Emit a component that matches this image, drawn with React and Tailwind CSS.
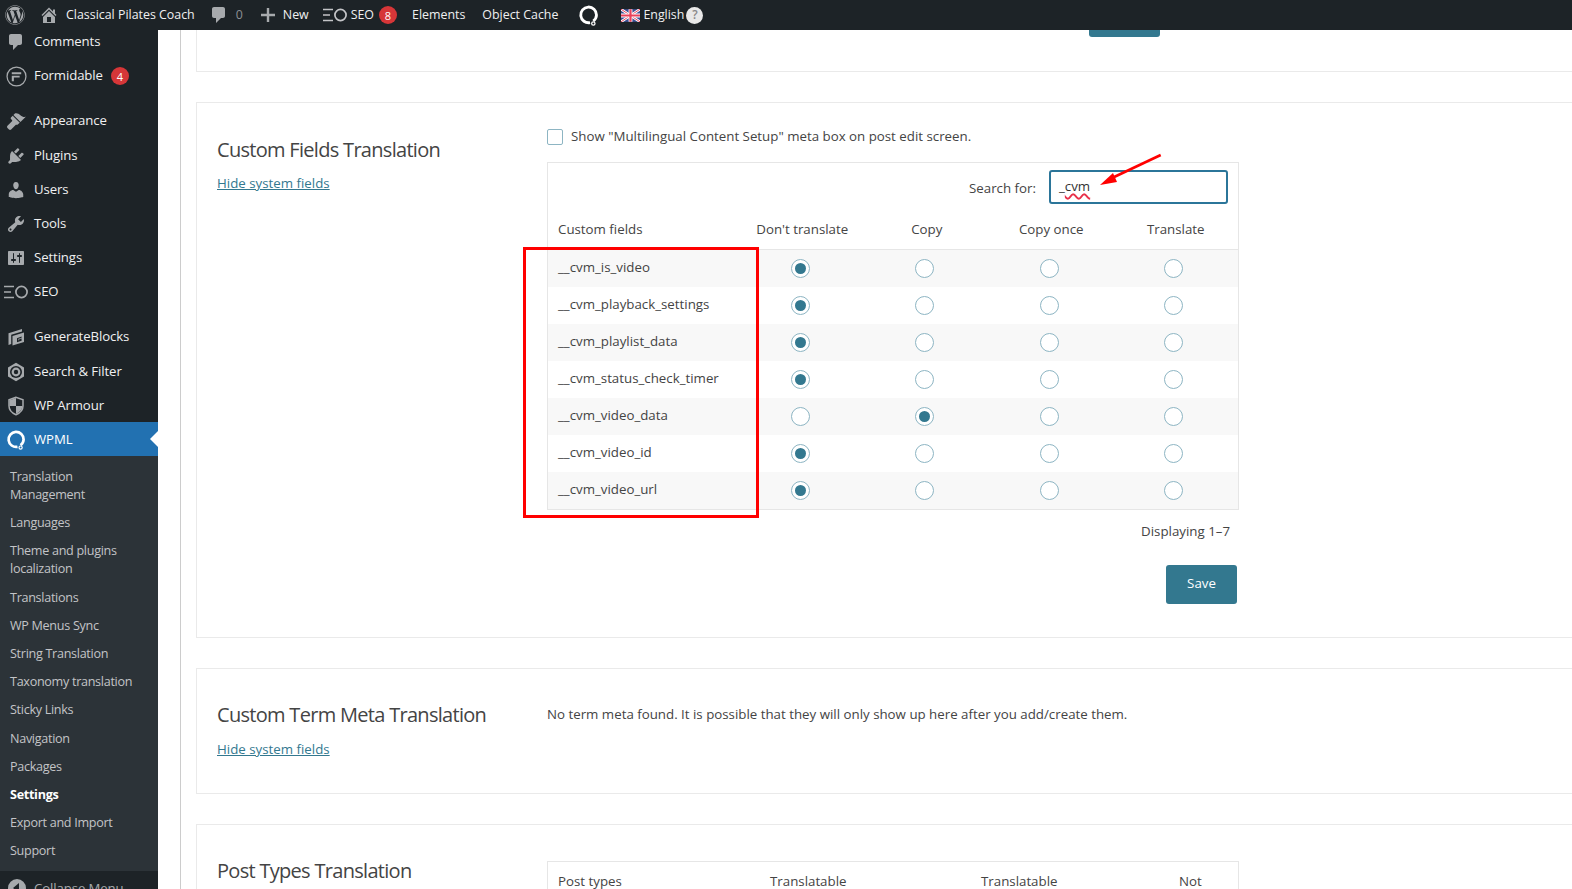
import React from "react";
import { FaWordpress } from "react-icons/fa";

const P = {
  home: "M16 8.5l1.53 1.53-1.06 1.06L10 4.62l-6.47 6.47-1.06-1.06L10 2.5l4 4v-2h2v4zm-6-2.46l6 5.99V18H4v-5.97zM12 17v-5H8v5h4z",
  comment: "M5 2h9c1.1 0 2 .9 2 2v7c0 1.1-.9 2-2 2h-2l-5 5v-5H5c-1.1 0-2-.9-2-2V4c0-1.1.9-2 2-2z",
  brush: "M14.48 11.06L7.41 3.99l1.5-1.5c.5-.56 2.3-.47 3.51.32 1.21.8 1.43 1.28 2.91 2.1 1.18.64 2.45 1.26 4.45.85zm-.71.71L6.7 4.7 4.93 6.47c-.39.39-.39 1.02 0 1.41l1.06 1.06c.39.39.39 1.03 0 1.42L1.5 14.85c-.6.6-.6 1.57 0 2.15l1.5 1.5c.6.6 1.55.6 2.15 0l4.5-4.5c.39-.39 1.03-.39 1.42 0z",
  plug: "M13.11 4.36L9.87 7.6 8 5.73l3.24-3.24c.35-.34 1.05-.2 1.56.32.52.51.66 1.21.31 1.55zm-8 1.77l.91-1.12 9.01 9.01-1.19.84c-.71.71-2.63 1.16-3.82 1.16H6.14L4.9 17.26c-.59.59-1.54.59-2.12 0-.59-.58-.59-1.53 0-2.12l1.24-1.24v-3.88c0-1.13.4-3.19 1.09-3.89zm7.26 3.97l3.24-3.24c.34-.35 1.04-.21 1.55.31.52.51.66 1.21.31 1.55l-3.24 3.25z",
  user: "M10 9.25c-2.27 0-2.73-3.44-2.73-3.44C7 4.02 7.82 2 9.97 2c2.16 0 2.98 2.02 2.71 3.81 0 0-.41 3.44-2.68 3.44zm0 2.57L12.72 10c2.39 0 4.52 2.33 4.52 4.53v2.49s-3.65 1.13-7.24 1.13c-3.65 0-7.24-1.13-7.24-1.13v-2.49c0-2.25 1.94-4.48 4.47-4.48z",
  tool: "M16.68 9.77c-1.34 1.34-3.3 1.67-4.95.99l-5.41 6.52c-.99.99-2.59.99-3.58 0s-.99-2.59 0-3.57l6.52-5.42c-.68-1.65-.35-3.61.99-4.95 1.28-1.28 3.12-1.62 4.72-1.06l-2.89 2.89 2.82 2.82 2.86-2.87c.53 1.58.18 3.39-1.08 4.65zM3.81 16.21c.4.39 1.04.39 1.43 0 .4-.4.4-1.04 0-1.43-.39-.4-1.03-.4-1.43 0-.39.39-.39 1.03 0 1.43z",
  settings: "M18 16V4c0-.55-.45-1-1-1H3c-.55 0-1 .45-1 1v12c0 .55.45 1 1 1h14c.55 0 1-.45 1-1zM8 11h1c.55 0 1 .45 1 1s-.45 1-1 1H8v1.5c0 .28-.22.5-.5.5s-.5-.22-.5-.5V13H6c-.55 0-1-.45-1-1s.45-1 1-1h1V5.5c0-.28.22-.5.5-.5s.5.22.5.5V11zm5-2h-1c-.55 0-1-.45-1-1s.45-1 1-1h1V5.5c0-.28.22-.5.5-.5s.5.22.5.5V7h1c.55 0 1 .45 1 1s-.45 1-1 1h-1v5.5c0 .28-.22.5-.5.5s-.5-.22-.5-.5V9z",
};

const Dash = ({ d, className = "w-5 h-5" }) => (
  <svg viewBox="0 0 20 20" className={className} fill="currentColor" fillRule="evenodd"><path d={d} /></svg>
);
const SeoIcon = ({ className = "w-6 h-4" }) => (
  <svg viewBox="0 0 24 16" className={className} fill="none" stroke="currentColor">
    <path d="M0 2.5h10M0 8h7M0 13.5h10" strokeWidth="1.3" />
    <circle cx="17.5" cy="8" r="5.6" strokeWidth="1.7" />
  </svg>
);
const Wpml = ({ className = "w-5 h-5" }) => (
  <svg viewBox="0 0 20 20" className={className} fill="none" stroke="currentColor">
    <path d="M11.5 16.8A7.5 7.5 0 1 1 17.6 9.5c0 2.4-1.2 4.2-3 5.8" strokeWidth="2.7" />
    <circle cx="14.6" cy="17.6" r="1.6" strokeWidth="1.2" />
  </svg>
);
const Formidable = () => (
  <svg viewBox="0 0 20 20" className="h-[21px] w-[21px]" fill="none" stroke="currentColor">
    <circle cx="10" cy="10" r="9" strokeWidth="1.2" />
    <path d="M5.5 6h9v1.8h-9zM5.5 9.2h7.5V11H7.5v3.5h-2z" fill="currentColor" stroke="none" />
  </svg>
);
const Generate = () => (
  <svg viewBox="0 0 20 20" className="h-5 w-5" fill="currentColor" fillRule="evenodd">
    <path d="M2.5 6.2L16 2v2.6L5.2 7.8V17l-2.7.9z" />
    <path d="M6.5 9.1L18 5.5V15L6.5 18.6zM11 11.3v3.9l4.6-1.4v-2.4l-2.3.7v1l-.9.3v-1.6l3.2-1V9.6z" />
  </svg>
);
const SearchFilter = () => (
  <svg viewBox="0 0 20 20" className="h-5 w-5">
    <path d="M10 .8l8 4.6v9.2l-8 4.6-8-4.6V5.4z" fill="#a7aaad" />
    <circle cx="10" cy="10" r="6" fill="#1d2327" />
    <circle cx="10" cy="10" r="4.4" fill="#a7aaad" />
    <circle cx="10" cy="10" r="2.2" fill="#1d2327" />
  </svg>
);
const Armour = () => (
  <svg viewBox="0 0 20 20" className="h-5 w-5">
    <path d="M10 2L3.5 4.3V10h6.5z" fill="#a7aaad" />
    <path d="M10 10h6.5c-.3 3.6-3 6.2-6.5 7.8z" fill="#a7aaad" />
    <path d="M10 1.3L3 3.8V10c0 4 3 7 7 8.7 4-1.7 7-4.7 7-8.7V3.8z" fill="none" stroke="#a7aaad" strokeWidth="1.5" />
  </svg>
);
const Flag = () => (
  <svg viewBox="0 0 60 40" className="h-[13px] w-[19px]">
    <rect width="60" height="40" fill="#3b4f93" />
    <path d="M0 0L60 40M60 0L0 40" stroke="#fff" strokeWidth="8" />
    <path d="M0 0L60 40M60 0L0 40" stroke="#e8415a" strokeWidth="3" />
    <path d="M30 0v40M0 20h60" stroke="#fff" strokeWidth="12" />
    <path d="M30 0v40M0 20h60" stroke="#e8415a" strokeWidth="7" />
  </svg>
);
const Badge = ({ n }) => (
  <span className="flex h-[18px] w-[18px] items-center justify-center rounded-full bg-[#d63638] text-[11px] leading-none text-white">{n}</span>
);

const menu = [
  { label: "Comments", icon: <Dash d={P.comment} />, cls: "h-[34px] pt-[2px]" },
  { label: "Formidable", icon: <Formidable />, badge: 4, cls: "h-[34px] mb-[11px] pt-[2px]" },
  { label: "Appearance", icon: <Dash d={P.brush} />, cls: "h-[35px]" },
  { label: "Plugins", icon: <Dash d={P.plug} />, cls: "h-[34px] pt-[2px]" },
  { label: "Users", icon: <Dash d={P.user} />, cls: "h-[34px] pt-[2px]" },
  { label: "Tools", icon: <Dash d={P.tool} />, cls: "h-[34px] pt-[2px]" },
  { label: "Settings", icon: <Dash d={P.settings} />, cls: "h-[34px] pt-[2px]" },
  { label: "SEO", icon: <SeoIcon />, cls: "h-[34px] mb-[11px] pt-[2px]" },
  { label: "GenerateBlocks", icon: <Generate />, cls: "h-[35px]" },
  { label: "Search & Filter", icon: <SearchFilter />, cls: "h-[34px] pt-[2px]" },
  { label: "WP Armour", icon: <Armour />, cls: "h-[34px] pt-[2px]" },
];

const sub = [
  ["Translation", "Management"],
  ["Languages"],
  ["Theme and plugins", "localization"],
  ["Translations"],
  ["WP Menus Sync"],
  ["String Translation"],
  ["Taxonomy translation"],
  ["Sticky Links"],
  ["Navigation"],
  ["Packages"],
  ["Settings"],
  ["Export and Import"],
  ["Support"],
];

const rows = [
  ["__cvm_is_video", 0],
  ["__cvm_playback_settings", 0],
  ["__cvm_playlist_data", 0],
  ["__cvm_status_check_timer", 0],
  ["__cvm_video_data", 1],
  ["__cvm_video_id", 0],
  ["__cvm_video_url", 0],
];

const Radio = ({ on }) => (
  <span className="flex h-[19px] w-[19px] items-center justify-center rounded-full border border-[#8db5c3] bg-white">
    {on && <span className="h-[11px] w-[11px] rounded-full bg-[#33788f]" />}
  </span>
);

const Side = ({ title, top = "pt-[31px]", gap = "mt-[9px]", link = true }) => (
  <div className={`w-[350px] shrink-0 pl-[20px] ${top}`}>
    <h2 className="text-[20px] leading-[30px] tracking-[-0.7px] text-[#444]">{title}</h2>
    {link && <a className={`block text-[13.3px] leading-[20px] text-[#33788f] underline ${gap}`}>Hide system fields</a>}
  </div>
);

export default function App() {
  return (
    <div className="relative flex h-[889px] w-[1572px] flex-col overflow-hidden bg-white font-['Open_Sans','Noto_Sans',sans-serif] text-[13.3px] text-[#444]">
      {/* admin bar */}
      <header className="flex h-[30px] shrink-0 items-center bg-[#1d2327] text-[12.4px] text-[#f0f0f1]">
        <FaWordpress className="ml-[5px] h-5 w-5 text-[#a7aaad]" />
        <span className="ml-[14px] text-[#a7aaad]"><Dash d={P.home} /></span>
        <span className="ml-[7px]">Classical Pilates Coach</span>
        <span className="ml-[14px] text-[#a7aaad]"><Dash d={P.comment} /></span>
        <span className="ml-[7px] text-[#8c8f94]">0</span>
        <svg viewBox="0 0 14 14" className="ml-[18px] h-[14px] w-[14px] text-[#a7aaad]" fill="currentColor"><path d="M5.8 0h2.4v5.8H14v2.4H8.2V14H5.8V8.2H0V5.8h5.8z" /></svg>
        <span className="ml-[8px]">New</span>
        <span className="ml-[14px] text-[#c3c4c7]"><SeoIcon /></span>
        <span className="ml-[4px]">SEO</span>
        <span className="ml-[5px]"><Badge n={8} /></span>
        <span className="ml-[15px]">Elements</span>
        <span className="ml-[17px]">Object Cache</span>
        <span className="ml-[20px] text-white"><Wpml className="h-[21px] w-[21px]" /></span>
        <span className="ml-[22px]"><Flag /></span>
        <span className="ml-[3px]">English</span>
        <span className="ml-[2px] flex h-[17px] w-[17px] items-center justify-center rounded-full bg-[#e8e8e8] text-[12px] font-semibold text-[#888]">?</span>
      </header>

      <div className="flex min-h-0 flex-1">
        {/* sidebar */}
        <aside className="w-[158px] shrink-0 overflow-hidden bg-[#1d2327] text-[13.2px] tracking-[-0.1px] text-[#f0f0f1]">
          <nav className="-mt-[6px]">
            {menu.map((m) => (
              <div key={m.label} className={`flex items-center ${m.cls}`}>
                <span className="flex w-[32px] shrink-0 items-center justify-center text-[#a7aaad]">{m.icon}</span>
                <span className="ml-[2px]">{m.label}</span>
                {m.badge && <span className="ml-[8px]"><Badge n={m.badge} /></span>}
              </div>
            ))}
            <div className="relative flex h-[34px] items-center bg-[#2271b1] pt-[2px] text-white">
              <span className="flex w-[32px] shrink-0 items-center justify-center"><Wpml /></span>
              <span className="ml-[2px]">WPML</span>
              <span className="absolute right-0 top-[9px] h-0 w-0 border-y-[8px] border-r-[8px] border-y-transparent border-r-white" />
            </div>
            <div className="bg-[#2c3338] pb-[6px] pt-[7px] text-[12.6px] leading-[18px] tracking-[-0.3px] text-[#c3c4c7]">
              {sub.map((s) => (
                <div key={s[0]} className={`px-[10px] py-[5.1px] ${s[0] === "Settings" ? "font-bold text-white" : ""}`}>
                  {s.map((l) => <div key={l}>{l}</div>)}
                </div>
              ))}
            </div>
            <div className="flex h-[34px] items-center text-[#a7aaad]">
              <span className="flex w-[34px] shrink-0 justify-center">
                <svg viewBox="0 0 20 20" className="h-5 w-5" fill="currentColor"><path fillRule="evenodd" d="M10 1a9 9 0 1 1 0 18 9 9 0 0 1 0-18zM12 5l-6 5 6 5z" /></svg>
              </span>
              <span>Collapse Menu</span>
            </div>
          </nav>
        </aside>

        {/* content */}
        <main className="ml-[22px] min-w-0 flex-1 overflow-hidden border-l border-[#ccc] pl-[15px]">
          <div className="-mr-[20px]">
            <section className="h-[42px] border-x border-b border-[#eaeaea]">
              <div className="ml-[892px] h-[7px] w-[71px] rounded-b-[3px] bg-[#33788f]" />
            </section>

            <section className="mt-[30px] flex h-[536px] border border-[#eaeaea]">
              <Side title="Custom Fields Translation" top="pt-[32px]" gap="mt-[8px]" />
              <div className="w-[692px] shrink-0 pt-[24px]">
                <label className="flex h-[20px] items-center">
                  <span className="h-[16px] w-[16px] rounded-[2px] border border-[#8db5c3]" />
                  <span className="ml-[8px]">Show "Multilingual Content Setup" meta box on post edit screen.</span>
                </label>
                <div className="mt-[15px] border border-[#e6e6e6]">
                  <div className="flex h-[49px] items-start justify-end pr-[10px] pt-[7px]">
                    <span className="mt-[8px] leading-[20px]">Search for:</span>
                    <div className="ml-[13px] flex h-[34px] w-[179px] items-center rounded-[3px] border-2 border-[#2b7599] pl-[8px] text-[#333]">
                      <span>_<span className="underline decoration-[#e8304a] decoration-wavy decoration-[1.5px] underline-offset-2">cvm</span></span>
                    </div>
                  </div>
                  <div className="grid h-[37.5px] grid-cols-[192px_repeat(4,1fr)] items-center border-b border-[#e6e6e6]">
                    <span className="pl-[10px]">Custom fields</span>
                    <span className="text-center">Don't translate</span>
                    <span className="text-center">Copy</span>
                    <span className="text-center">Copy once</span>
                    <span className="text-center">Translate</span>
                  </div>
                  {rows.map(([name, sel], i) => (
                    <div key={name} className={`grid h-[37px] grid-cols-[192px_repeat(4,1fr)] items-center ${i % 2 === 0 ? "bg-[#f8f8f8]" : "bg-white"}`}>
                      <span className="pl-[10px]">{name}</span>
                      {[0, 1, 2, 3].map((c) => (
                        <span key={c} className="flex justify-center pr-[4px]"><Radio on={sel === c} /></span>
                      ))}
                    </div>
                  ))}
                </div>
                <div className="mt-[11.5px] pr-[9px] text-right leading-[20px]">Displaying 1–7</div>
                <div className="mt-[23.5px] flex justify-end pr-[2px]">
                  <button className="h-[39px] w-[71px] rounded-[3px] bg-[#33788f] text-white">Save</button>
                </div>
              </div>
            </section>

            <section className="mt-[30px] flex h-[126px] border border-[#eaeaea]">
              <Side title="Custom Term Meta Translation" />
              <div className="pt-[35px] leading-[20px]">No term meta found. It is possible that they will only show up here after you add/create them.</div>
            </section>

            <section className="mt-[30px] flex h-[100px] border border-[#eaeaea]">
              <Side title="Post Types Translation" link={false} />
              <div className="mt-[36px] h-[60px] w-[692px] shrink-0 border border-[#e6e6e6] pl-[10px]">
                <div className="flex pt-[9px] leading-[20px]">
                  <span className="w-[212px]">Post types</span>
                  <span className="w-[211px]">Translatable</span>
                  <span className="w-[198px]">Translatable</span>
                  <span>Not</span>
                </div>
              </div>
            </section>
          </div>
        </main>
      </div>

      {/* annotations */}
      <div className="pointer-events-none absolute left-[523px] top-[247px] h-[271px] w-[236px] border-[3px] border-[#f00]" />
      <svg className="pointer-events-none absolute left-[1090px] top-[150px]" width="75" height="40" viewBox="0 0 75 40">
        <path d="M70.7 5L22 28" stroke="#f00" strokeWidth="2.6" />
        <path d="M10 35L23 23L27 32z" fill="#f00" />
      </svg>
    </div>
  );
}
